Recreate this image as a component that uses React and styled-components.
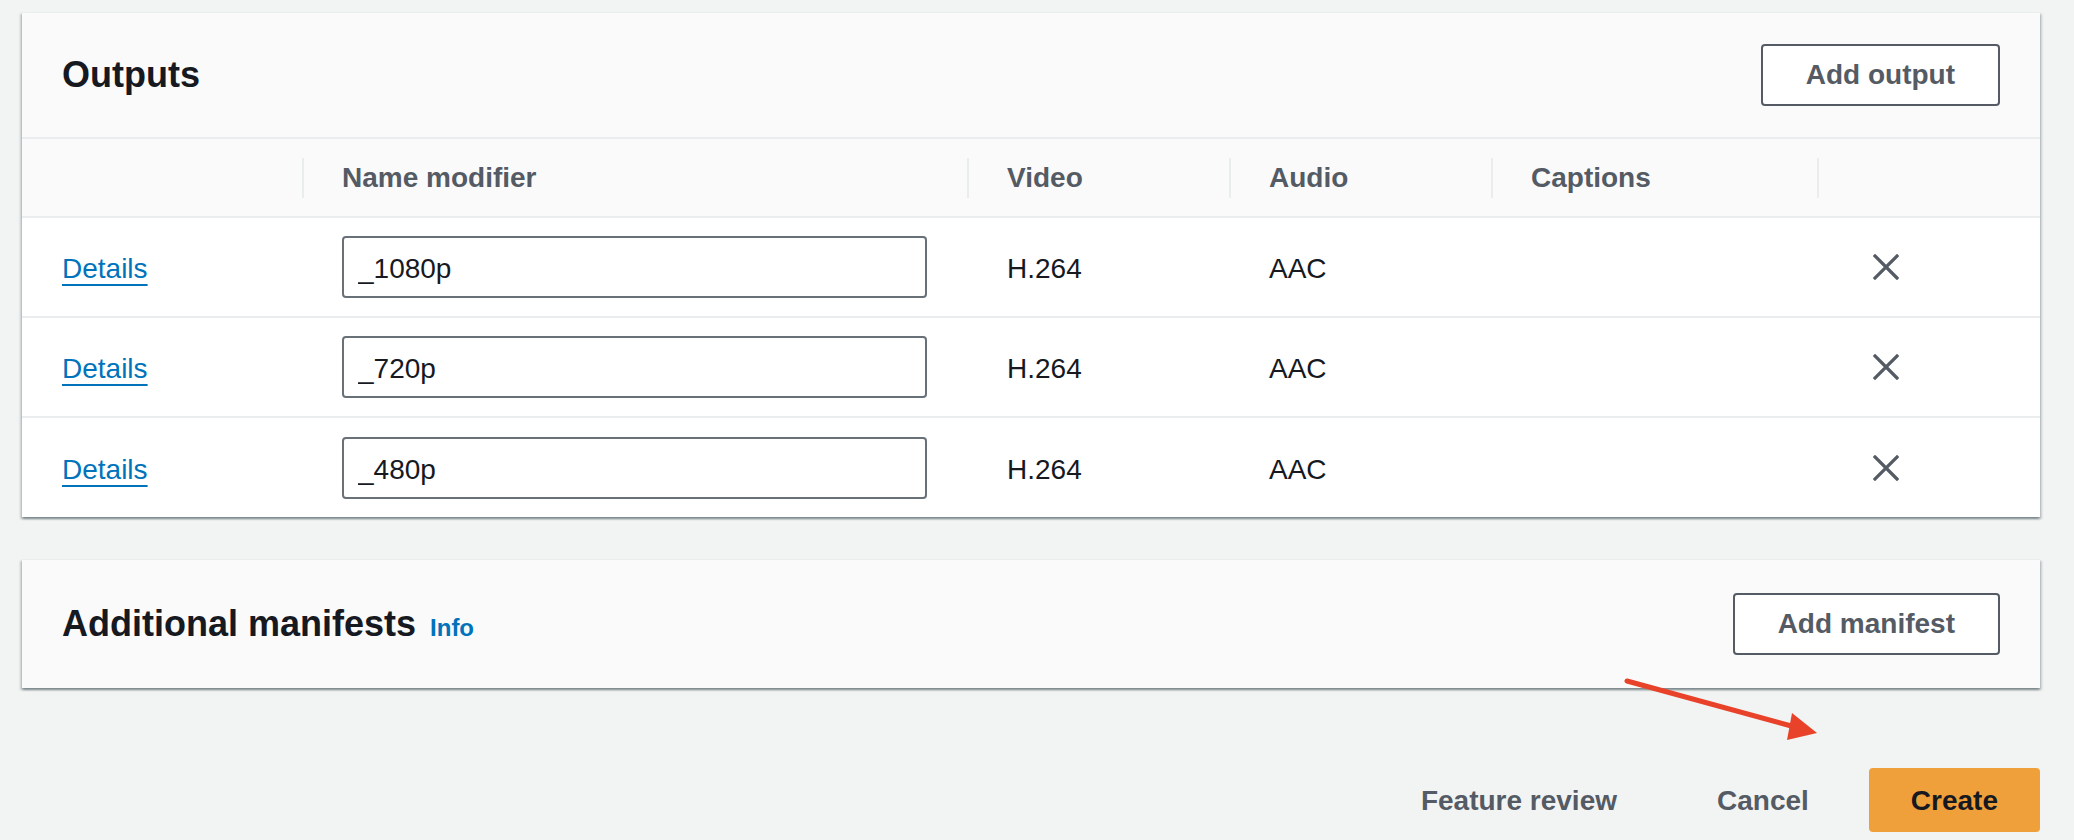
import React from 'react';
import styled, { createGlobalStyle } from 'styled-components';

const GlobalStyle = createGlobalStyle`
  html, body {
    margin: 0;
    padding: 0;
    background: #f2f3f3;
  }
  body {
    font-family: "Liberation Sans", Arial, sans-serif;
    color: #16191f;
  }
`

const Page = styled.div`
  position: relative;
  width: 2074px;
  height: 840px;
  box-sizing: border-box;
  padding: 12px 34px 0 22px;
  display: flex;
  flex-direction: column;
  overflow: hidden;
`

const Card = styled.section`
  background: #fff;
  border-top: 1px solid #eaeded;
  box-shadow: 0 2px 2px 0 rgba(0, 28, 36, 0.3), 2px 2px 2px 0 rgba(0, 28, 36, 0.15), -2px 2px 2px 0 rgba(0, 28, 36, 0.15);
  margin-bottom: ${p => p.$gap || 0}px;
`

const CardHeader = styled.div`
  display: flex;
  align-items: center;
  justify-content: space-between;
  height: ${p => p.$h}px;
  padding: 0 40px;
  background: #fafafa;
  border-bottom: ${p => (p.$line ? '2px solid #eaeded' : 'none')};
`

const Title = styled.h2`
  margin: 0;
  font-size: 36px;
  font-weight: 700;
  color: #16191f;
  display: flex;
  align-items: baseline;
  gap: 14px;
`

const InfoLink = styled.a`
  font-size: 24px;
  font-weight: 700;
  color: #0073bb;
  text-decoration: none;
`

const OutlineButton = styled.button`
  height: 62px;
  padding: 0 43px;
  background: #fff;
  border: 2px solid #545b64;
  border-radius: 4px;
  font-family: inherit;
  font-size: 28px;
  font-weight: 700;
  color: #545b64;
`

const cols = '280px 665px 262px 262px 326px 1fr';

const HeadRow = styled.div`
  display: grid;
  grid-template-columns: ${cols};
  align-items: center;
  height: 77px;
  background: #fafafa;
  border-bottom: 2px solid #eaeded;
`

const HeadCell = styled.div`
  height: 40px;
  display: flex;
  align-items: center;
  padding: 0 38px;
  border-left: ${p => (p.$first ? 'none' : '2px solid #eaeded')};
  font-size: 28px;
  font-weight: 700;
  color: #545b64;
`

const Row = styled.div`
  display: grid;
  grid-template-columns: ${cols};
  align-items: center;
  height: ${p => (p.$last ? 99 : 98)}px;
  border-bottom: ${p => (p.$last ? 'none' : '2px solid #eaeded')};
`

const Cell = styled.div`
  padding: 4px 40px 0;
  font-size: 28px;
  color: #16191f;
  display: flex;
  align-items: center;
`

const IconCell = styled(Cell)`
  padding: 0 0 0 55px;
`

const DetailsLink = styled.a`
  color: #0073bb;
  text-decoration: underline;
  text-decoration-thickness: 2px;
  text-underline-offset: 6px;
  font-size: 28px;
`

const NameInput = styled.input`
  width: 100%;
  height: 62px;
  margin-top: -4px;
  box-sizing: border-box;
  padding: 4px 14px 0;
  border: 2px solid #687078;
  border-radius: 4px;
  font-family: inherit;
  font-size: 28px;
  color: #16191f;
  background: #fff;
`

const RemoveButton = styled.button`
  border: none;
  background: none;
  padding: 0;
  width: 28px;
  height: 28px;
  display: flex;
  align-items: center;
  justify-content: center;
`

const Footer = styled.div`
  display: flex;
  justify-content: flex-end;
  align-items: center;
  gap: 20px;
  margin-top: 80px;
`

const TextButton = styled.button`
  height: 64px;
  padding: 2px 40px 0;
  border: none;
  background: none;
  font-family: inherit;
  font-size: 28px;
  font-weight: 700;
  color: #545b64;
`

const PrimaryButton = styled(TextButton)`
  background: #f0a03b;
  color: #16191f;
  border-radius: 4px;
  padding: 2px 42px 0;
`

const Arrow = styled.svg`
  position: absolute;
  left: 1615px;
  top: 670px;
  pointer-events: none;
`

const outputs = [
  { name: '_1080p', video: 'H.264', audio: 'AAC' },
  { name: '_720p', video: 'H.264', audio: 'AAC' },
  { name: '_480p', video: 'H.264', audio: 'AAC' },
]

const CloseIcon = () => (
  <svg width="26" height="26" viewBox="0 0 26 26">
    <path d="M2 2 L24 24 M24 2 L2 24" stroke="#545b64" strokeWidth="3.2" strokeLinecap="square" fill="none" />
  </svg>
)

const App = () => {
  return (
    <>
      <GlobalStyle />
      <Page>
        <Card $gap={42}>
          <CardHeader $h={124} $line>
            <Title>Outputs</Title>
            <OutlineButton>Add output</OutlineButton>
          </CardHeader>
          <HeadRow>
            <HeadCell $first></HeadCell>
            <HeadCell>Name modifier</HeadCell>
            <HeadCell>Video</HeadCell>
            <HeadCell>Audio</HeadCell>
            <HeadCell>Captions</HeadCell>
            <HeadCell></HeadCell>
          </HeadRow>
          {outputs.map((o, i) => (
            <Row key={o.name} $last={i === outputs.length - 1}>
              <Cell><DetailsLink href="#">Details</DetailsLink></Cell>
              <Cell><NameInput defaultValue={o.name} /></Cell>
              <Cell>{o.video}</Cell>
              <Cell>{o.audio}</Cell>
              <Cell></Cell>
              <IconCell>
                <RemoveButton aria-label="Remove"><CloseIcon /></RemoveButton>
              </IconCell>
            </Row>
          ))}
        </Card>

        <Card>
          <CardHeader $h={128}>
            <Title>
              Additional manifests
              <InfoLink href="#">Info</InfoLink>
            </Title>
            <OutlineButton>Add manifest</OutlineButton>
          </CardHeader>
        </Card>

        <Footer>
          <TextButton>Feature review</TextButton>
          <TextButton>Cancel</TextButton>
          <PrimaryButton>Create</PrimaryButton>
        </Footer>

        <Arrow width="220" height="80" viewBox="0 0 220 80">
          <line x1="12" y1="11" x2="180" y2="57" stroke="#e8432a" strokeWidth="5" strokeLinecap="round" />
          <polygon points="202,63 177,43 172,70" fill="#e8432a" />
        </Arrow>
      </Page>
    </>
  )
}

export default App
